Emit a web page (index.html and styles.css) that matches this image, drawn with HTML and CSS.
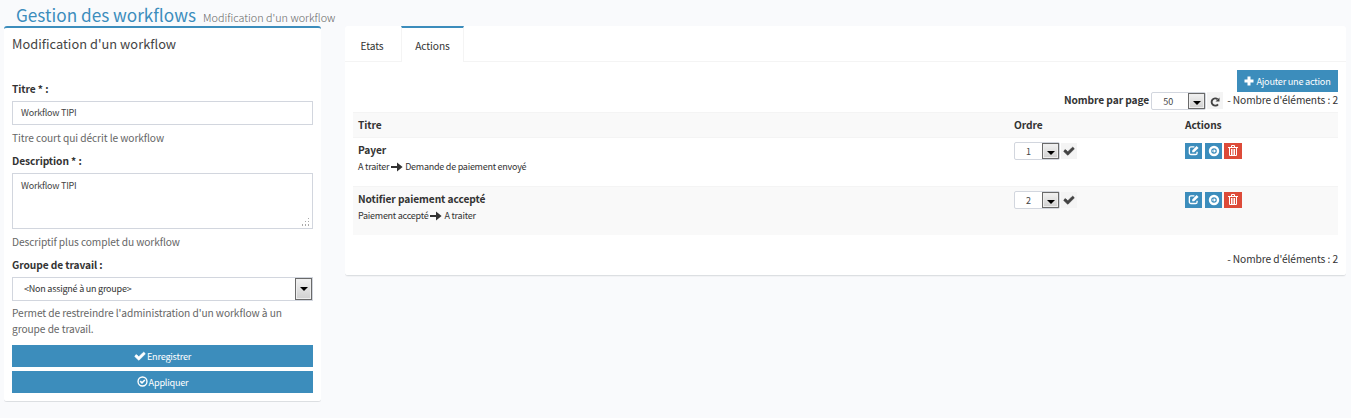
FILE: index.html
```
<!DOCTYPE html>
<html lang="fr">
<head>
<meta charset="utf-8">
<title>Gestion des workflows</title>
<link rel="stylesheet" href="styles.css">
</head>
<body>
<svg class="defs" width="0" height="0">
  <symbol id="check" viewBox="0 0 1792 1792"><path d="M1671 566q0 40-28 68l-724 724-136 136q-28 28-68 28t-68-28l-136-136-362-362q-28-28-28-68t28-68l136-136q28-28 68-28t68 28l294 295 656-657q28-28 68-28t68 28l136 136q28 28 28 68z" stroke="currentColor" stroke-width="90"/></symbol>
  <symbol id="okcircle" viewBox="0 0 16 16"><circle cx="8" cy="8" r="6.500" fill="none" stroke="currentColor" stroke-width="2"/><path d="M3.900 8.200l1.600-1.600 1.800 1.800 3.300-3.300 1.600 1.600-4.900 4.900z"/></symbol>
  <symbol id="plus" viewBox="0 0 10 10"><path d="M3.500 .5h3v3h3v3h-3v3h-3v-3h-3v-3h3z"/></symbol>
  <symbol id="arrow" viewBox="0 0 12 10"><path d="M0 4h6V.4L11.600 5 6 9.600V6H0z"/></symbol>
  <symbol id="refresh" viewBox="0 0 10 10"><path d="M8 7.300A3.600 3.600 0 1 1 7.600 2.300" fill="none" stroke="currentColor" stroke-width="1.900"/><path d="M9.500.5v4H5.500z"/></symbol>
  <symbol id="edit" viewBox="0 0 12 12"><path d="M7 2H3.200A1.700 1.700 0 0 0 1.500 3.700v5A1.700 1.700 0 0 0 3.200 10.400h5a1.700 1.700 0 0 0 1.700-1.700V7.300" fill="none" stroke="currentColor" stroke-width="1.500"/><path d="M4.600 8V5.900L9.400 1.100l2.100 2.100L6.700 8z"/></symbol>
  <symbol id="circlearrow" viewBox="0 0 12 12"><circle cx="6" cy="6" r="4" fill="none" stroke="currentColor" stroke-width="2.400"/><path d="M4 5.400h1.800V4.100L8 6 5.800 7.900V6.600H4z"/></symbol>
  <symbol id="trash" viewBox="0 0 12 12"><path d="M1 2.500h10M4.500 2V.5h3V2M2.500 3v7.500h7V3M4.500 4v6M6 4v6M7.500 4v6" fill="none" stroke="currentColor" stroke-width="1"/></symbol>
</svg>
<header class="page-head"><h1>Gestion des workflows</h1><small>Modification d'un workflow</small></header>
<main class="columns">
  <section class="box">
    <h2>Modification d'un workflow</h2>
    <div class="field"><label>Titre * :</label><div class="control">Workflow TIPI</div><p>Titre court qui décrit le workflow</p></div>
    <div class="field"><label>Description * :</label><div class="control area">Workflow TIPI
      <svg class="grip" width="9" height="9" viewBox="0 0 9 9"><path d="M7 0h1v1h-1zM4 3h1v1h-1zM7 3h1v1h-1zM1 6h1v2h-1zM4 6h1v2h-1zM7 6h1v2h-1z"/></svg></div><p>Descriptif plus complet du workflow</p></div>
    <div class="field"><label>Groupe de travail :</label><div class="control pick"><span class="pick-text">&lt;Non assigné à un groupe&gt;</span><i class="drop"></i></div><p class="long">Permet de restreindre l'administration d'un workflow à un<br>groupe de travail.</p></div>
    <div class="buttons">
      <div class="btn"><svg width="12" height="12"><use href="#check"/></svg><span>Enregistrer</span></div>
      <div class="btn"><svg width="11" height="11"><use href="#okcircle"/></svg><span>Appliquer</span></div>
    </div>
  </section>
  <section class="tabs-box">
    <nav><div class="tab">Etats</div><div class="tab active">Actions</div><div class="rest"></div></nav>
    <div class="content">
      <div class="btn add"><svg width="10" height="10"><use href="#plus"/></svg><span>Ajouter une action</span></div>
      <div class="pager"><b>Nombre par page</b><div class="mini wide"><span>50</span><i class="drop"></i></div><div class="gray"><svg width="10" height="10"><use href="#refresh"/></svg></div><span class="count">- Nombre d'éléments : 2</span></div>
      <div class="row head"><b>Titre</b><b>Ordre</b><b>Actions</b></div>
      <div class="row">
        <div><b>Payer</b><div class="flow">A traiter<svg width="12" height="10"><use href="#arrow"/></svg>Demande de paiement envoyé</div></div>
        <div class="order"><div class="mini"><span>1</span><i class="drop"></i></div><div class="gray"><svg width="12" height="12"><use href="#check"/></svg></div></div>
        <div class="acts"><i><svg width="11" height="11"><use href="#edit"/></svg></i><i><svg width="12" height="12"><use href="#circlearrow"/></svg></i><i class="red"><svg width="12" height="12"><use href="#trash"/></svg></i></div>
      </div>
      <div class="row odd">
        <div><b>Notifier paiement accepté</b><div class="flow">Paiement accepté<svg width="12" height="10"><use href="#arrow"/></svg>A traiter</div></div>
        <div class="order"><div class="mini"><span>2</span><i class="drop"></i></div><div class="gray"><svg width="12" height="12"><use href="#check"/></svg></div></div>
        <div class="acts"><i><svg width="11" height="11"><use href="#edit"/></svg></i><i><svg width="12" height="12"><use href="#circlearrow"/></svg></i><i class="red"><svg width="12" height="12"><use href="#trash"/></svg></i></div>
      </div>
      <div class="foot count">- Nombre d'éléments : 2</div>
    </div>
  </section>
</main>
</body>
</html>
```
FILE: styles.css
```
* { box-sizing: border-box; }
body { margin: 0; background: #f9fafc; color: #333; font: 10.2px/16px "Noto Sans CJK SC", "Noto Sans", sans-serif; letter-spacing: -.08px; white-space: nowrap; overflow: hidden; }
h1, h2, p { margin: 0; font-weight: 400; }
svg { fill: currentColor; display: block; flex: none; }
.defs { position: absolute; }
.page-head { display: flex; height: 26px; padding-left: 16px; align-items: baseline; color: #3c8dbc; letter-spacing: 0; }
h1 { font-size: 17.2px; line-height: 30px; }
.page-head small { color: #666; font-size: 10.8px; font-weight: 300; margin-left: 7px; }
.columns { display: flex; gap: 24px; padding: 0 5px 0 4px; align-items: flex-start; }
.box { width: 317px; height: 376px; background: #fff; border-top: 2px solid #3c8dbc; border-bottom: 1px solid #dcdfe2; border-radius: 3px; padding: 8px 8px 0; box-shadow: 0 1px 1px rgba(0,0,0,.03); }
h2 { font-size: 12.8px; line-height: 16px; letter-spacing: .04px; color: #444; margin-bottom: 29px; }
.field { margin-bottom: 7px; }
.field label { display: block; font-weight: 700; }
.control { position: relative; height: 24px; margin: 4px 0 5px; border: 1px solid #d2d6de; padding: 3px 8px; color: #444; font-size: 9px; letter-spacing: -.22px; background: #fff; }
.area { height: 56px; padding-top: 4px; }
.grip { position: absolute; right: 2px; bottom: 1px; color: #aaa; }
.field p { color: #666; }
.field p.long { margin: -1px 0 8px; }
.pick { display: flex; justify-content: space-between; padding: 0 0 0 11px; line-height: 22px; color: #333; }
.drop { width: 17px; height: 100%; border: 1px solid #6a6a6a; background: linear-gradient(#f2f2f2, #d0d0d0); display: flex; align-items: center; justify-content: center; box-shadow: inset 0 0 0 1px #eee; flex: none; }
.drop::after { content: ""; border: solid transparent; border-width: 4px 4px 0; border-top-color: #000; }
.buttons { display: grid; gap: 4px; }
.btn { height: 22px; background: #3c8dbc; color: #fff; display: flex; align-items: center; justify-content: center; font-size: 9.2px; letter-spacing: -.25px; gap: 1px; padding-bottom: 1px; }
.tabs-box { flex: 1; height: 250px; background: #fff; border-radius: 3px; border-bottom: 1px solid #dcdfe2; box-shadow: 0 1px 1px rgba(0,0,0,.03); }
nav { display: flex; height: 36px; color: #333; }
.tab { width: 56px; border-bottom: 1px solid #f4f4f4; text-align: center; padding: 12px 2px 0 0; }
.tab.active { width: 63px; border: solid #f4f4f4; border-width: 2px 1px 0; border-top-color: #3c8dbc; padding: 10px 0 0; }
.rest { flex: 1; border-bottom: 1px solid #f4f4f4; }
.content { padding: 8px 8px 0; }
.add { width: 101px; margin-left: auto; gap: 2px; }
.pager { display: flex; height: 20px; justify-content: flex-end; align-items: flex-start; }
.mini { display: flex; flex: none; width: 46px; height: 18px; border: 1px solid #d2d6de; border-radius: 2px; background: #fff; color: #444; font-size: 9px; }
.mini span { flex: 1; text-align: center; line-height: 18px; }
.mini.wide { width: 55px; margin: 0 1px 0 2px; }
.mini.wide span { padding-right: 4px; }
.mini .drop { width: 17px; height: 16px; }
.mini .drop::after { margin-top: 3px; }
.gray { flex: none; width: 16px; height: 16px; background: #f4f4f4; display: flex; align-items: center; justify-content: center; color: #444; }
.pager .gray { height: 17px; padding-top: 2px; }
.order .gray { margin-top: 1px; padding: 0 0 1px; }
.pager .count { margin-left: 4px; }
.row { display: grid; grid-template-columns: 656px 171px 1fr; height: 49px; padding: 4px 5px 0; border-top: 1px solid #f4f4f4; }
.row.head { height: 25px; background: #f9f9f9; }
.odd { background: #f9f9f9; }
.flow { display: flex; align-items: center; font-size: 9px; letter-spacing: -.25px; gap: 2px; margin-top: 1px; }
.order, .acts { display: flex; gap: 1px; align-items: flex-start; }
.acts { gap: 3px; padding-top: 1px; }
.acts i { width: 17px; height: 16px; background: #3c8dbc; color: #fff; display: flex; align-items: center; justify-content: center; }
.acts i svg { margin-top: -1px; }
.acts i.red { width: 18px; background: #dd4b39; margin-left: -1px; }
.foot { text-align: right; margin-top: 16px; }
```
